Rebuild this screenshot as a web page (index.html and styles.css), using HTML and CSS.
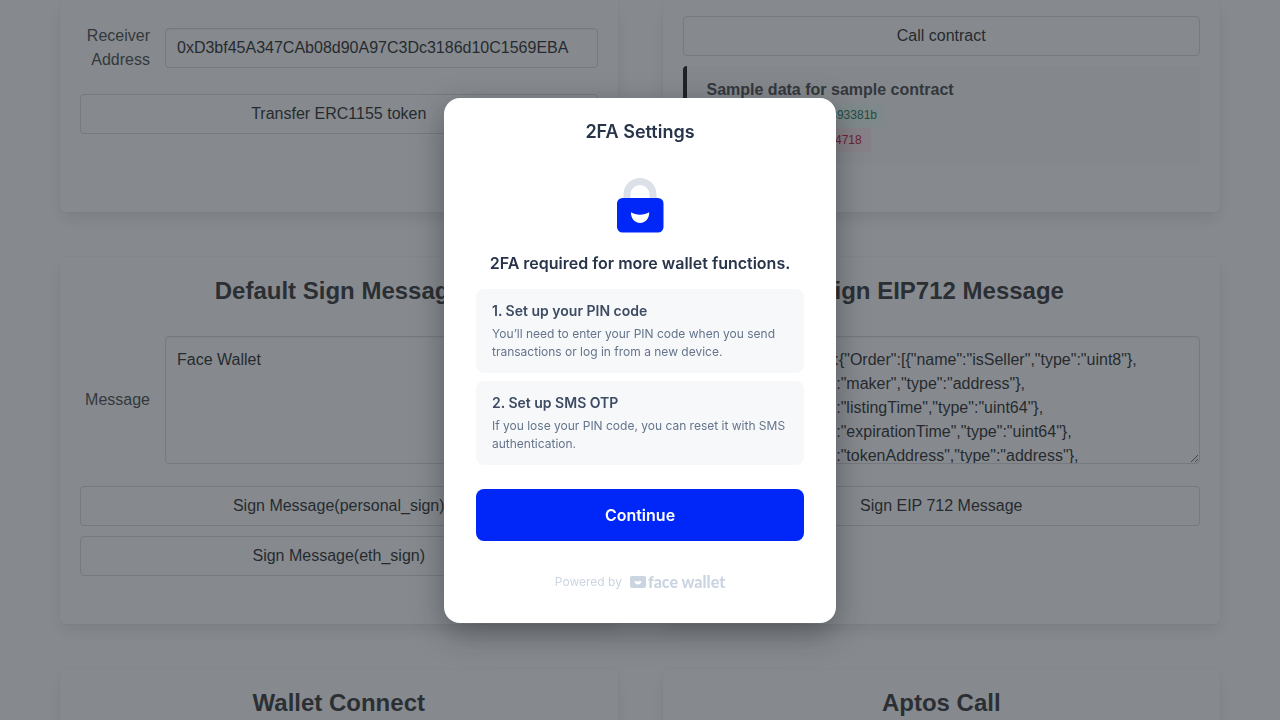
FILE: index.html
```html
<!DOCTYPE html>
<html lang="en">
<head>
<meta charset="utf-8">
<meta name="viewport" content="width=device-width, initial-scale=1">
<title>Face Wallet Sample</title>
<link rel="stylesheet" href="styles.css">
</head>
<body>
<main class="page">
  <section class="box box-continued">
    <div class="field">
      <label class="label" for="receiver">Receiver Address</label>
      <input class="input" id="receiver" type="text" value="0xD3bf45A347CAb08d90A97C3Dc3186d10C1569EBA">
    </div>
    <div class="buttons">
      <button class="button" type="button">Transfer ERC1155 token</button>
    </div>
  </section>

  <section class="box box-continued box-contract">
    <div class="buttons">
      <button class="button" type="button">Call contract</button>
    </div>
    <div class="sample">
      <h3 class="sample-title">Sample data for sample contract</h3>
      <div><span class="tag tag-success">0xb2c8045e6a7f09c2893381b</span></div>
      <div><span class="tag tag-danger">0xa87d9420b3e615094718</span></div>
    </div>
  </section>

  <section class="box">
    <h2 class="title">Default Sign Message</h2>
    <div class="field">
      <label class="label" for="message">Message</label>
      <textarea class="textarea" id="message">Face Wallet</textarea>
    </div>
    <div class="buttons">
      <button class="button" type="button">Sign Message(personal_sign)</button>
      <button class="button" type="button">Sign Message(eth_sign)</button>
    </div>
  </section>

  <section class="box">
    <h2 class="title">Sign EIP712 Message</h2>
    <div class="field">
      <label class="label" for="typed">Message</label>
      <textarea class="textarea" id="typed">{"types":{"Order":[{"name":"isSeller","type":"uint8"},
{"name":"maker","type":"address"},
{"name":"listingTime","type":"uint64"},
{"name":"expirationTime","type":"uint64"},
{"name":"tokenAddress","type":"address"},
{"name":"tokenId","type":"uint256"}]}}</textarea>
    </div>
    <div class="buttons">
      <button class="button" type="button">Sign EIP 712 Message</button>
    </div>
  </section>

  <section class="box">
    <h2 class="title">Wallet Connect</h2>
  </section>

  <section class="box">
    <h2 class="title">Aptos Call</h2>
  </section>
</main>

<div class="overlay">
  <div class="modal" role="dialog" aria-modal="true" aria-labelledby="modal-title">
    <h1 class="modal-title" id="modal-title">2FA Settings</h1>
    <svg class="lock" width="48" height="56" viewBox="0 0 48 56" aria-hidden="true">
      <path d="M11 24V16.500a13 13 0 0 1 26 0V24" fill="none" stroke="#dce0e9" stroke-width="7"/>
      <rect x="1" y="20" width="46.500" height="34.500" rx="5.500" fill="#0026f8"/>
      <path d="M15 34.300C17.500 35.900 20.500 36.700 24 36.700s6.600-.800 9.200-2.400c.4 5.500-3.500 10.700-9.100 10.700S14.600 39.800 15 34.300z" fill="#fff"/>
    </svg>
    <h2 class="modal-heading">2FA required for more wallet functions.</h2>
    <ol class="steps">
      <li class="step">
        <h3 class="step-title">1. Set up your PIN code</h3>
        <p class="step-text">You’ll need to enter your PIN code when you send transactions or log in from a new device.</p>
      </li>
      <li class="step">
        <h3 class="step-title">2. Set up SMS OTP</h3>
        <p class="step-text">If you lose your PIN code, you can reset it with SMS authentication.</p>
      </li>
    </ol>
    <button class="continue" type="button">Continue</button>
    <p class="powered">
      <span class="powered-text">Powered by</span>
      <span class="brand">
        <svg width="16" height="12" viewBox="0 0 16 12" aria-hidden="true">
          <rect width="16" height="12" rx="2" fill="#cbd5e1"/>
          <path d="M4.500 4.800c1.200.200 1.700.700 3.500.700s2.300-.500 3.500-.700C11.500 6.900 10 8.500 8 8.500S4.500 6.900 4.500 4.800z" fill="#fff"/>
        </svg>
        <span class="brand-name">face wallet</span>
      </span>
    </p>
  </div>
</div>
</body>
</html>
```
FILE: styles.css
```css
*, *::before, *::after { box-sizing: border-box; }

body, h1, h2, h3, p, ol { margin: 0; padding: 0; }

body {
  font: 16px/24px "Liberation Sans", Arial, sans-serif;
  color: #4a4a4a;
  background: #fff;
}

/* The page behind the dialog does not scroll while it is open. */
.page {
  height: 100vh;
  overflow: hidden;
  display: grid;
  grid-template-columns: 1fr 1fr;
  grid-auto-rows: max-content;
  gap: 45px;
  padding: 0 60px;
}

.box {
  min-width: 0;
  padding: 20px 20px 48px;
  border-radius: 6px;
  background: #fff;
  box-shadow: 0 8px 16px -2px rgba(10, 10, 10, .1), 0 0 0 1px rgba(10, 10, 10, .02);
}

.box-continued {
  padding-top: 24px;
  border-top-left-radius: 0;
  border-top-right-radius: 0;
}

.box-contract { padding-top: 16px; }

.title {
  margin-bottom: 32px;
  font-size: 24px;
  line-height: 27px;
  font-weight: 700;
  text-align: center;
  color: #363636;
}

.field {
  display: flex;
  align-items: center;
  gap: 15px;
  margin-bottom: 22px;
}

.label {
  flex: 0 0 70px;
  text-align: right;
}

.input, .textarea {
  flex: 1;
  min-width: 0;
  display: block;
  font: inherit;
  color: #2b2b2b;
  background: #fff;
  border: 1px solid #dbdbdb;
  border-radius: 4px;
  box-shadow: inset 0 1px 2px rgba(10, 10, 10, .05);
}

.input {
  height: 40px;
  padding: 0 11px;
}

.textarea {
  height: 128px;
  padding: 11px;
  resize: vertical;
}

.buttons {
  display: flex;
  flex-direction: column;
  gap: 10px;
}

.button {
  height: 40px;
  padding: 0 16px;
  font: inherit;
  color: #2b2b2b;
  background: #fff;
  border: 1px solid #dbdbdb;
  border-radius: 4px;
}

.sample {
  display: grid;
  gap: 1px;
  margin-top: 10px;
  padding: 12px 20px;
  border-left: 4px solid #1c1c1c;
  border-radius: 4px;
  background: #fafafa;
}

.sample-title {
  font-size: 16px;
  font-weight: 700;
}

.tag {
  display: flex;
  align-items: center;
  width: max-content;
  height: 24px;
  padding: 0 9px;
  border-radius: 4px;
  font-size: 12px;
}

.tag-success { color: #257953; background: #effaf5; }
.tag-danger { color: #cc0f35; background: #feecf0; }

.overlay {
  position: fixed;
  inset: 0;
  display: flex;
  align-items: center;
  justify-content: center;
  background: rgba(35, 42, 49, .55);
}

.modal {
  display: flex;
  flex-direction: column;
  width: 392px;
  max-width: 100%;
  padding: 22px 32px 32px;
  border-radius: 16px;
  background: #fff;
  box-shadow: 0 10px 32px rgba(20, 22, 30, .4);
  font-family: Inter, sans-serif;
  color: #27344a;
}

.modal-title {
  font-size: 18px;
  line-height: 24px;
  font-weight: 600;
  text-align: center;
}

.lock {
  align-self: center;
  margin: 34px 0 17px;
}

.modal-heading {
  font-size: 16px;
  line-height: 24px;
  font-weight: 600;
  text-align: center;
}

.steps {
  display: grid;
  gap: 8px;
  margin: 14px 0 24px;
  list-style: none;
}

.step {
  padding: 12px 16px;
  border-radius: 8px;
  background: #f7f8fa;
}

.step-title {
  margin-bottom: 4px;
  font-size: 14px;
  line-height: 20px;
  font-weight: 600;
  color: #3d4c63;
}

.step-text {
  font-size: 12px;
  line-height: 18px;
  color: #64748b;
}

.continue {
  height: 52px;
  border: 0;
  border-radius: 8px;
  background: #0026f8;
  color: #fff;
  font: 600 16px/24px Inter, sans-serif;
}

.powered {
  display: flex;
  align-items: center;
  justify-content: center;
  gap: 8px;
  margin-top: 32px;
  font-size: 12px;
  line-height: 18px;
  color: #cbd5e1;
}

.brand {
  display: flex;
  align-items: center;
  gap: 2px;
}

.brand-name {
  font-family: Lato, sans-serif;
  font-size: 16px;
  font-weight: 900;
}
```
